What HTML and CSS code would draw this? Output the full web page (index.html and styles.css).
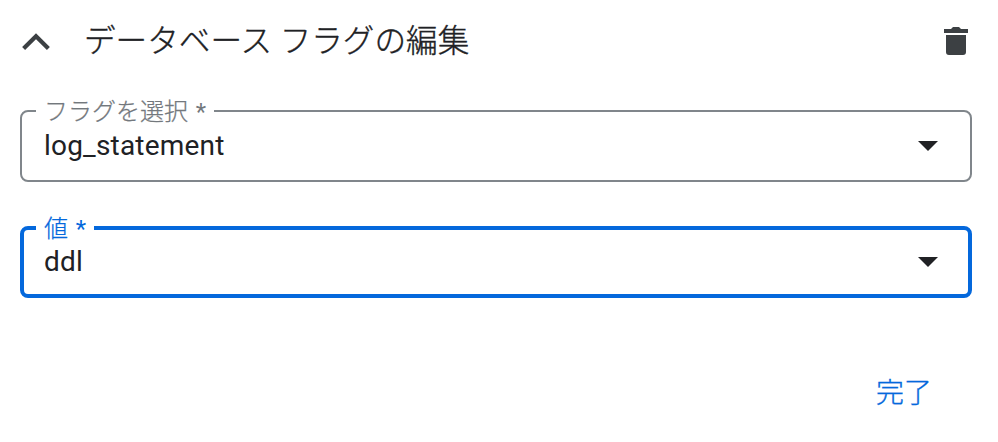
FILE: index.html
```
<!DOCTYPE html>
<html lang="ja">
<head>
<meta charset="utf-8">
<title>データベース フラグの編集</title>
<link rel="stylesheet" href="styles.css">
</head>
<body>
<main class="panel">
  <header class="header">
    <svg class="chevron" width="28" height="18" viewBox="0 0 28 18"><path d="M1.6 16.5 14 4.3 26.4 16.5" fill="none" stroke="#3c4043" stroke-width="4.2"/></svg>
    <h1 class="title">データベース フラグの編集</h1>
    <svg class="trash" width="24" height="28" viewBox="0 0 24 28"><path d="M0 2H7L9 0H15L17 2H24V6H0ZM2 8H22V25Q22 28 19 28H5Q2 28 2 25Z" fill="#3c4043"/></svg>
  </header>
  <fieldset class="field">
    <legend class="label"><span class="label-text">フラグを選択 <span class="required">*</span></span></legend>
    <div class="select"><span class="value">log_statement</span><svg class="arrow" width="20" height="10" viewBox="0 0 20 10"><path d="M0 0H20L10 10Z" fill="#202124"/></svg></div>
  </fieldset>
  <fieldset class="field focused">
    <legend class="label"><span class="label-text">値 <span class="required">*</span></span></legend>
    <div class="select"><span class="value">ddl</span><svg class="arrow" width="20" height="10" viewBox="0 0 20 10"><path d="M0 0H20L10 10Z" fill="#202124"/></svg></div>
  </fieldset>
  <footer class="actions"><button class="done">完了</button></footer>
</main>
</body>
</html>
```
FILE: styles.css
```
* { box-sizing: border-box; }
body {
  margin: 0;
  background: #fff;
  color: #202124;
  font-family: Roboto, "Noto Sans CJK JP", sans-serif;
}
.panel {
  display: flex;
  flex-direction: column;
  height: 442px;
  padding: 17px 26px 0 20px;
}
.header {
  display: flex;
  align-items: center;
  height: 48px;
  padding: 0 4px 0 2px;
}
.chevron { margin-right: 34px; }
.title {
  flex: 1;
  margin: 0;
  padding-top: 2px;
  font-size: 31.6px;
  font-weight: 300;
  line-height: 46px;
  white-space: nowrap;
  -webkit-text-stroke: 0.35px currentColor;
}
.field {
  height: 83px;
  min-width: 0;
  margin: 34px 0 0;
  padding: 0 32px 0 22px;
  border: 2px solid #80868b;
  border-radius: 8px;
}
.label {
  height: 24px;
  width: 178px;
  margin-left: -8px;
  padding: 0 8px;
  color: #73787d;
  font-size: 24px;
  font-weight: 300;
  line-height: 27px;
  white-space: nowrap;
  word-spacing: 2px;
  -webkit-text-stroke: 0.25px currentColor;
}
.required {
  font-weight: 400;
  -webkit-text-stroke: 0;
}
.select {
  display: flex;
  align-items: center;
  justify-content: space-between;
  height: 46px;
}
.value {
  font-size: 28px;
  line-height: 44px;
  letter-spacing: 0.2px;
}
.focused {
  height: 82px;
  padding: 0 30px 0 20px;
  border: 4px solid #0468dc;
}
.focused .select { height: 44px; }
.focused .label {
  width: 58px;
  color: #0468dc;
}
.actions {
  display: flex;
  justify-content: flex-end;
  margin-top: 72px;
  padding-right: 40px;
}
.done {
  padding: 0;
  border: 0;
  background: none;
  color: #0468dc;
  font: 300 28px/48px Roboto, "Noto Sans CJK JP", sans-serif;
  -webkit-text-stroke: 0.3px currentColor;
}
```
